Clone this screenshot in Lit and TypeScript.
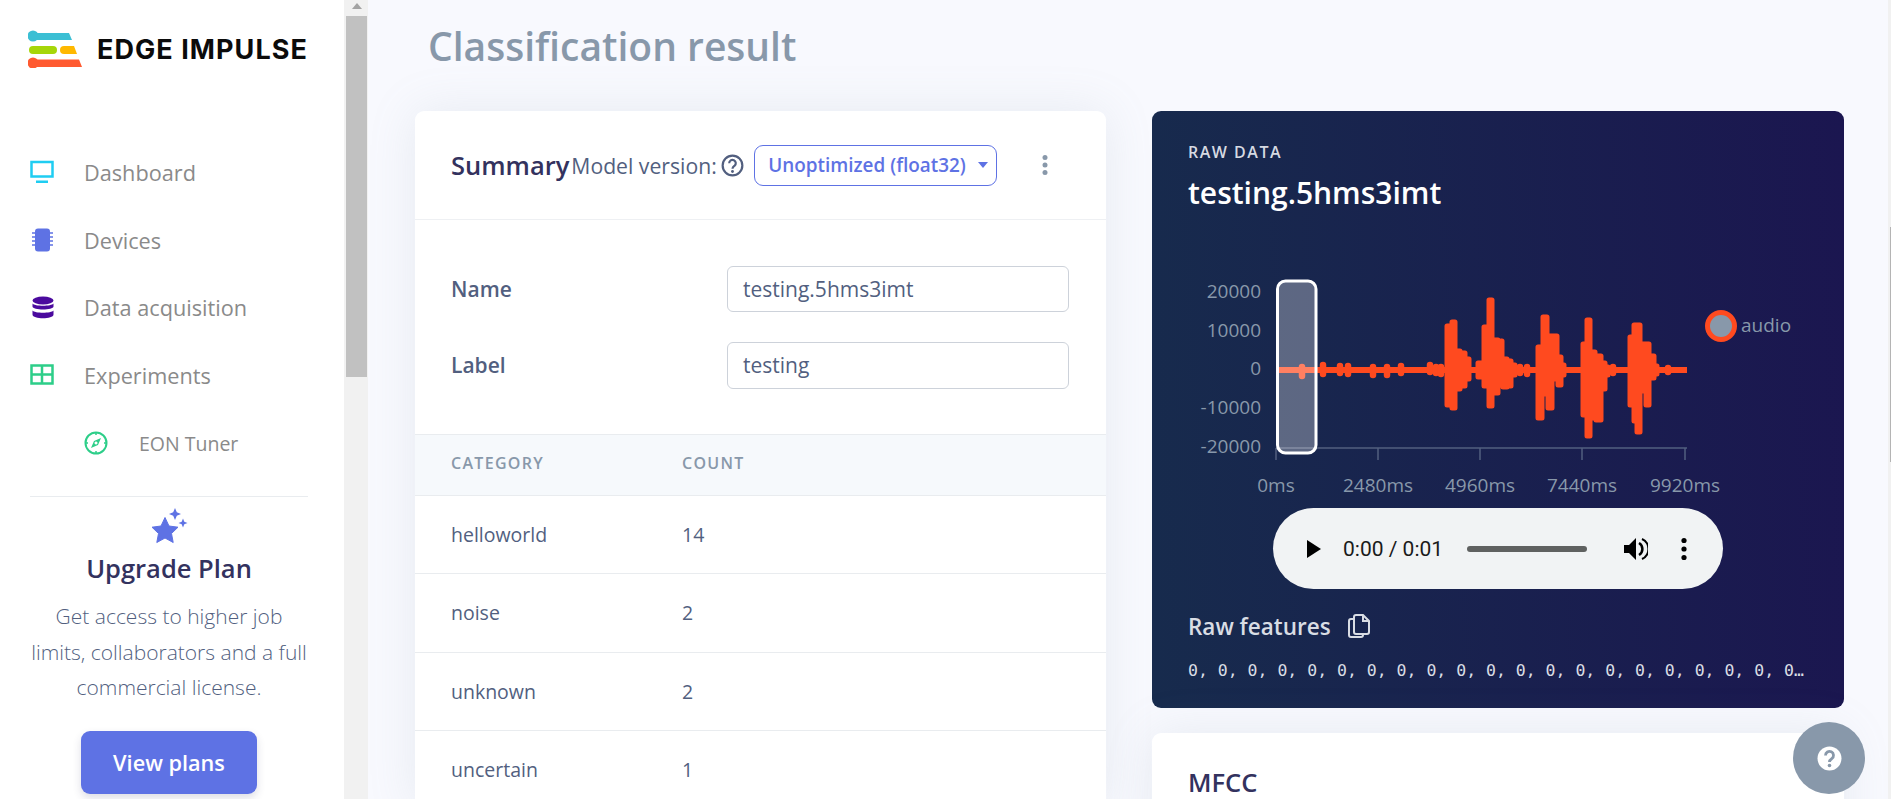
import { LitElement, html, css, svg } from 'lit';
import { customElement } from 'lit/decorators.js';

// speech bursts as steps: [x, top, bottom] holds until the next x, in chart coords
const BURSTS: number[][][] = [
  [[1447, 325, 404], [1452, 321, 407], [1456, 350, 388], [1461, 352, 385], [1466, 358, 378], [1470, 366, 372]],
  [[1478, 362, 376], [1484, 326, 385], [1489, 299, 405], [1493, 339, 392], [1499, 340, 384], [1503, 358, 386], [1508, 360, 385], [1512, 364, 374], [1516, 366, 372]],
  [[1538, 346, 417], [1543, 316, 393], [1548, 335, 407], [1553, 335, 378], [1558, 356, 384], [1562, 364, 374], [1565, 366, 372]],
  [[1583, 343, 414], [1587, 319, 435], [1591, 351, 417], [1596, 355, 419], [1602, 362, 388], [1606, 366, 374], [1609, 366, 372]],
  [[1630, 336, 404], [1634, 324, 420], [1637, 324, 431], [1641, 343, 390], [1646, 343, 404], [1650, 355, 377], [1655, 365, 373], [1658, 366, 372]],
];

function wavePath(): string {
  let d = '';
  for (const b of BURSTS) {
    for (let i = 0; i < b.length - 1; i++) {
      const [x0, top, bottom] = b[i];
      for (let x = x0; x < b[i + 1][0]; x++) {
        d += `M${x} ${top}V${bottom}`;
      }
    }
  }
  return d;
}

const BLIPS = [[1302, 366, 375], [1323, 364, 373], [1340, 365, 372], [1348, 365, 373], [1373, 366, 374], [1387, 366, 374], [1401, 365, 372], [1430, 364, 371], [1436, 366, 372], [1441, 366, 373], [1520, 366, 372], [1527, 366, 373], [1613, 366, 372], [1668, 367, 371]];

const Y_TICKS = [['20000', 290], ['10000', 329], ['0', 367], ['-10000', 406], ['-20000', 445]] as const;
const X_TICKS = [['0ms', 1276], ['2480ms', 1378], ['4960ms', 1480], ['7440ms', 1582], ['9920ms', 1685]] as const;

const ROWS = [['helloworld', '14'], ['noise', '2'], ['unknown', '2'], ['uncertain', '1']];

@customElement('app-root')
export class AppRoot extends LitElement {
  static styles = css`
    :host {
      display: flex;
      height: 799px;
      overflow: hidden;
      font-family: 'Open Sans', sans-serif;
      background: #f8f9fe;
      position: relative;
      color: #525f7f;
    }

    /* sidebar */
    .sidebar {
      width: 344px;
      height: 799px;
      background: #fff;
      flex: none;
      box-sizing: border-box;
      overflow: hidden;
    }
    .logo {
      display: flex;
      align-items: center;
      height: 70px;
      padding: 14px 0 0 28px;
      gap: 15px;
    }
    .logo svg { flex: none; }
    .logo span {
      font-family: Inter, sans-serif;
      font-weight: 700;
      font-size: 27px;
      letter-spacing: 1.05px;
      color: #0b0b0b;
      white-space: nowrap;
    }
    nav { padding-top: 54.500px; }
    .item {
      display: flex;
      align-items: center;
      height: 67.7px;
      padding-left: 30px;
      font-size: 21.7px;
      color: #8a8a8a;
    }
    .item svg { flex: none; width: 24px; height: 24px; margin-right: 30px; }
    .item.sub { padding-left: 84px; font-size: 19.500px; }
    .item.sub svg { margin-right: 31px; }
    .upgrade {
      margin: 19px 36px 0 30px;
      border-top: 1.500px solid #e9ecef;
      text-align: center;
    }
    .upgrade svg { display: block; margin: 11.500px auto 0; }
    .upgrade h3 {
      margin: 6.500px 0 0;
      font-size: 25.500px;
      line-height: 34px;
      font-weight: 600;
      color: #33325e;
    }
    .upgrade p {
      margin: 14.500px 0 0;
      font-size: 21px;
      line-height: 35.500px;
      font-weight: 300;
      color: #525f7f;
    }
    .btn {
      display: flex;
      align-items: center;
      justify-content: center;
      width: 176px;
      height: 63px;
      margin: 25px 0 0 51px;
      background: #5e72e4;
      border-radius: 9px;
      color: #fff;
      font-size: 21.7px;
      font-weight: 600;
      box-shadow: 0 4px 9px rgba(50, 50, 93, 0.16);
    }

    /* window scrollbar */
    .rail {
      width: 24px;
      height: 799px;
      flex: none;
      background: #f1f1f1;
      box-sizing: border-box;
      padding: 3px 1px 0 2px;
    }
    .arrow {
      width: 0;
      height: 0;
      margin: 0 auto 7px;
      border: 5.500px solid transparent;
      border-top: 0;
      border-bottom: 6px solid #a3a3a3;
    }
    .thumb { height: 361px; background: #c1c1c1; }

    /* main */
    main { flex: 1; min-width: 0; padding-left: 47px; }
    h1 {
      margin: 0 0 0 13px;
      height: 111px;
      font-size: 39px;
      line-height: 92px;
      font-weight: 600;
      color: #8898aa;
    }
    .cols { display: flex; align-items: flex-start; gap: 46px; }
    .left, .right { flex: none; }
    .left { width: 691px; }
    .right { width: 692px; }
    .card {
      background: #fff;
      border-radius: 9px;
      box-shadow: 0 0 48px rgba(136, 152, 170, 0.15);
      overflow: hidden;
    }

    .head {
      display: flex;
      align-items: center;
      height: 109px;
      padding-left: 36px;
      border-bottom: 1.500px solid #eef0f3;
      box-sizing: border-box;
    }
    .head h2 {
      margin: 0;
      font-size: 25.500px;
      font-weight: 600;
      color: #33325e;
    }
    .model {
      margin-left: 2px;
      font-size: 21.200px;
      color: #525f7f;
      white-space: nowrap;
    }
    .head .q { margin-left: 4px; flex: none; }
    .select {
      display: flex;
      align-items: center;
      box-sizing: border-box;
      width: 243px;
      height: 41px;
      margin-left: 10.500px;
      padding-left: 13px;
      border: 1.500px solid #5e72e4;
      border-radius: 9px;
      color: #5e72e4;
      font-size: 18.900px;
      font-weight: 600;
      white-space: nowrap;
    }
    .caret {
      margin-left: 12px;
      border: 5.500px solid transparent;
      border-top: 6px solid #5e72e4;
      border-bottom: 0;
    }
    .kebab { margin-left: 45px; flex: none; }

    .fields { padding: 45.500px 37px 45px 36px; }
    .field { display: flex; align-items: center; justify-content: space-between; }
    .field + .field { margin-top: 30px; }
    .field label { font-size: 21px; font-weight: 600; color: #525f7f; }
    .val {
      box-sizing: border-box;
      width: 342px;
      height: 46.500px;
      line-height: 45px;
      padding-left: 15px;
      border: 1.500px solid #cdd2da;
      border-radius: 6px;
      font-size: 21px;
      color: #525f7f;
    }

    .tr {
      display: grid;
      grid-template-columns: 231px 1fr;
      padding-left: 36px;
      align-items: center;
      height: 78.500px;
      border-top: 1.500px solid #e9ecef;
      box-sizing: border-box;
      font-size: 19.500px;
      color: #525f7f;
    }
    .tr.th {
      height: 61px;
      padding-bottom: 4px;
      background: #f6f9fc;
      font-size: 16px;
      font-weight: 600;
      letter-spacing: 1.300px;
      color: #8898aa;
    }

    .raw {
      height: 597px;
      box-sizing: border-box;
      padding: 31px 36px 0;
      border-radius: 9px;
      background: linear-gradient(87deg, #172b4d, #1b1650);
    }
    .raw .over {
      font-size: 16px;
      line-height: 20px;
      font-weight: 600;
      letter-spacing: 1.500px;
      color: #d6dae2;
    }
    .raw h2 {
      margin: 8px 0 0;
      font-size: 30px;
      line-height: 46px;
      font-weight: 600;
      color: #fff;
    }
    .chart { display: block; margin: 24px 0 0 -36px; }
    .chart text { font-family: 'Open Sans', sans-serif; font-size: 19px; fill: #8898aa; }

    .player {
      display: flex;
      align-items: center;
      box-sizing: border-box;
      width: 450px;
      height: 81px;
      margin: 0 0 0 85px;
      padding-left: 34px;
      border-radius: 41px;
      background: #f1f3f4;
      color: #1a1a1a;
      font-family: Roboto, sans-serif;
      font-size: 21px;
    }
    .player svg { flex: none; }
    .time { margin-left: 22px; width: 124px; white-space: nowrap; }
    .track { width: 120px; height: 6px; border-radius: 3px; background: #5f6160; flex: none; }
    .vol { margin-left: 37px; }
    .more { margin-left: 33px; }

    .rawf {
      display: flex;
      align-items: center;
      gap: 17px;
      margin-top: 20px;
      height: 34px;
      font-size: 22.500px;
      font-weight: 600;
      color: #d9dde4;
    }
    .nums {
      width: 620px;
      margin-top: 16px;
      font-family: 'DejaVu Sans Mono', monospace;
      font-size: 16.500px;
      line-height: 24px;
      color: #d9dde4;
      white-space: nowrap;
      overflow: hidden;
      text-overflow: ellipsis;
    }
    .mfcc { margin-top: 25px; height: 200px; padding: 30px 36px; box-sizing: border-box; }
    .mfcc h2 { margin: 0; font-size: 25.500px; line-height: 38px; font-weight: 600; color: #33325e; }

    .fab {
      position: absolute;
      left: 1793px;
      top: 722px;
      width: 72px;
      height: 72px;
      border-radius: 50%;
      background: #8898aa;
      display: flex;
      align-items: center;
      justify-content: center;
    }
    .rail2 {
      width: 3px;
      height: 799px;
      flex: none;
      background: #f1f1f1;
      box-sizing: border-box;
      padding: 227px 0 0 2px;
    }
    .rail2 div { width: 1px; height: 235px; background: #b4b4b4; }
  `;

  private chart() {
    return html`<svg class="chart" width="720" height="268" viewBox="1152 239 720 268">
      <line x1="1276" x2="1687" y1="447" y2="447" stroke="#525f7f" stroke-width="1.500" />
      ${X_TICKS.map(([t, x]) => svg`
        <line x1=${x} x2=${x} y1="447" y2="459" stroke="#525f7f" stroke-width="1.500" />
        <text x=${x} y="491" text-anchor="middle">${t}</text>`)}
      ${Y_TICKS.map(([t, y]) => svg`<text x="1261" y=${y + 7} text-anchor="end">${t}</text>`)}
      <line x1="1278" x2="1687" y1="369" y2="369" stroke="#ff4a1f" stroke-width="6" />
      <path d=${wavePath()} fill="none" stroke="#ff4a1f" stroke-width="5" stroke-linecap="round" />
      ${BLIPS.map(([x, a, b]) => svg`<line x1=${x} x2=${x} y1=${a} y2=${b} stroke="#ff4a1f" stroke-width="6.500" stroke-linecap="round" />`)}
      <rect x="1277.500" y="280" width="38.500" height="172" rx="8" fill="#fff" fill-opacity="0.3" stroke="#fff" stroke-width="3" />
      <circle cx="1721" cy="325" r="13.500" fill="#8898aa" stroke="#ff4a1f" stroke-width="5" />
      <text x="1741" y="331">audio</text>
    </svg>`;
  }

  render() {
    return html`
      <aside class="sidebar">
        <div class="logo">
          <svg width="54" height="38" viewBox="28 29 54 38">
            <circle cx="33" cy="35" r="5.500" fill="#3bbfd4" />
            <path d="M33 32h36l3 7H33z" fill="#3bbfd4" />
            <rect x="29" y="45" width="28" height="8" rx="4" fill="#a6d609" />
            <path d="M64 45h10l3 8H64a4 4 0 0 1 0-8z" fill="#ffb800" />
            <circle cx="33" cy="62" r="5.500" fill="#ff5a30" />
            <path d="M33 58.500h46l3 7.500H33z" fill="#ff5a30" />
          </svg>
          <span>EDGE IMPULSE</span>
        </div>
        <nav>
          <div class="item">
            <svg viewBox="0 0 24 24"><path d="M1.500 2h21v14.500h-21z" fill="none" stroke="#1fcdf2" stroke-width="2.500" /><rect x="6" y="20.500" width="12" height="2.500" fill="#1fcdf2" /></svg>
            Dashboard
          </div>
          <div class="item">
            <svg viewBox="0 0 24 24"><rect x="5" y="0.500" width="15" height="23" rx="3" fill="#5e72e4" /><path d="M2 5h3M2 9h3M2 13h3M2 17h3M20 5h3M20 9h3M20 13h3M20 17h3" stroke="#5e72e4" stroke-width="1.500" /></svg>
            Devices
          </div>
          <div class="item">
            <svg viewBox="0 0 24 24"><g fill="#4b0a9e"><ellipse cx="13" cy="4.500" rx="10.500" ry="4" /><path d="M2.500 7.500c2 3 19 3 21 0v3c0 4-21 4-21 0z" /><path d="M2.500 14.500c2 3 19 3 21 0v4c0 5-21 5-21 0z" /></g></svg>
            Data acquisition
          </div>
          <div class="item">
            <svg viewBox="0 0 24 24"><path d="M1.500 2.500h21v18h-21zM1.500 11.500h21M12 2.500v18" fill="none" stroke="#2dce89" stroke-width="2.500" /></svg>
            Experiments
          </div>
          <div class="item sub">
            <svg viewBox="0 0 24 24"><circle cx="12" cy="12" r="10.500" fill="none" stroke="#2dce89" stroke-width="2" /><path d="M12 1v3M12 20v3M1 12h3M20 12h3" stroke="#2dce89" stroke-width="1.500" /><path d="M17 7l-7 3-3 7 7-3zM12 10.500a1.500 1.500 0 1 0 .01 0z" fill="#2dce89" fill-rule="evenodd" /></svg>
            EON Tuner
          </div>
        </nav>
        <div class="upgrade">
          <svg width="38" height="36" viewBox="0 0 38 36">
            <path d="M15 9.500l4 8.500 9 1.200-6.500 6.300 1.700 9-8.200-4.500-8.200 4.500 1.700-9L2 19.200 11 18z" fill="#5e72e4" stroke="#5e72e4" stroke-linejoin="round" />
            <path d="M25 0l1.800 4.200L31 6l-4.200 1.800L25 12l-1.800-4.200L19 6l4.200-1.800zM33 10.500l1.300 3.200 3.200 1.300-3.200 1.300L33 19.500l-1.300-3.200-3.200-1.300 3.200-1.300z" fill="#5e72e4" />
          </svg>
          <h3>Upgrade Plan</h3>
          <p>Get access to higher job limits, collaborators and a full commercial license.</p>
          <div class="btn">View plans</div>
        </div>
      </aside>
      <div class="rail"><div class="arrow"></div><div class="thumb"></div></div>
      <main>
        <h1>Classification result</h1>
        <div class="cols">
          <div class="left card">
            <div class="head">
              <h2>Summary</h2>
              <span class="model">Model version:</span>
              <svg class="q" width="23" height="23" viewBox="0 0 21 21"><circle cx="10.500" cy="10.500" r="9" fill="none" stroke="#525f7f" stroke-width="2" /><path d="M7.500 8.500a3 3 0 1 1 4.800 2.300c-1.200.9-1.800 1.300-1.800 2.700" fill="none" stroke="#525f7f" stroke-width="2" /><circle cx="10.500" cy="16" r="1.300" fill="#525f7f" /></svg>
              <div class="select">Unoptimized (float32)<span class="caret"></span></div>
              <svg class="kebab" width="6" height="20" viewBox="0 0 6 20"><g fill="#8898aa"><circle cx="3" cy="2.500" r="2.500" /><circle cx="3" cy="10" r="2.500" /><circle cx="3" cy="17.500" r="2.500" /></g></svg>
            </div>
            <div class="fields">
              <div class="field"><label>Name</label><div class="val">testing.5hms3imt</div></div>
              <div class="field"><label>Label</label><div class="val">testing</div></div>
            </div>
            <div class="tr th"><span>CATEGORY</span><span>COUNT</span></div>
            ${ROWS.map(([a, b]) => html`<div class="tr"><span>${a}</span><span>${b}</span></div>`)}
          </div>
          <div class="right">
            <div class="raw">
              <div class="over">RAW DATA</div>
              <h2>testing.5hms3imt</h2>
              ${this.chart()}
              <div class="player">
                <svg width="14" height="18" viewBox="0 0 14 18"><path d="M0 0l14 9-14 9z" fill="#000" /></svg>
                <span class="time">0:00 / 0:01</span>
                <div class="track"></div>
                <svg class="vol" width="24" height="24" viewBox="0 0 24 24"><path d="M0 8v8h5l7 7V1L5 8z" fill="#000" /><path d="M15 6a7 7 0 0 1 0 12" fill="none" stroke="#000" stroke-width="2.500" /><path d="M18 2a11 11 0 0 1 0 20" fill="none" stroke="#000" stroke-width="2" /></svg>
                <svg class="more" width="6" height="24" viewBox="0 0 6 24"><g fill="#000"><circle cx="3" cy="3.500" r="2.600" /><circle cx="3" cy="12" r="2.600" /><circle cx="3" cy="20.500" r="2.600" /></g></svg>
              </div>
              <div class="rawf">
                Raw features
                <svg width="22" height="24" viewBox="0 0 22 24"><path d="M8 1h7l6 6v11a2 2 0 0 1-2 2H8a2 2 0 0 1-2-2V3a2 2 0 0 1 2-2zM15 1v6h6" fill="none" stroke="#d9dde4" stroke-width="2" /><path d="M6 5H3a2 2 0 0 0-2 2v14a2 2 0 0 0 2 2h10a2 2 0 0 0 2-2v-1" fill="none" stroke="#d9dde4" stroke-width="2" /></svg>
              </div>
              <div class="nums">${Array(40).fill('0').join(', ')}</div>
            </div>
            <div class="card mfcc"><h2>MFCC</h2></div>
          </div>
        </div>
      </main>
      <div class="rail2"><div></div></div>
      <div class="fab">
        <svg width="25" height="25" viewBox="0 0 25 25"><circle cx="12.500" cy="12.500" r="12" fill="#fff" /><path d="M8.500 9.500a4 4 0 1 1 6.300 3.200c-1.500 1-2.300 1.500-2.300 3.300" fill="none" stroke="#8898aa" stroke-width="2.800" /><circle cx="12.500" cy="19.500" r="1.800" fill="#8898aa" /></svg>
      </div>
    `;
  }
}
